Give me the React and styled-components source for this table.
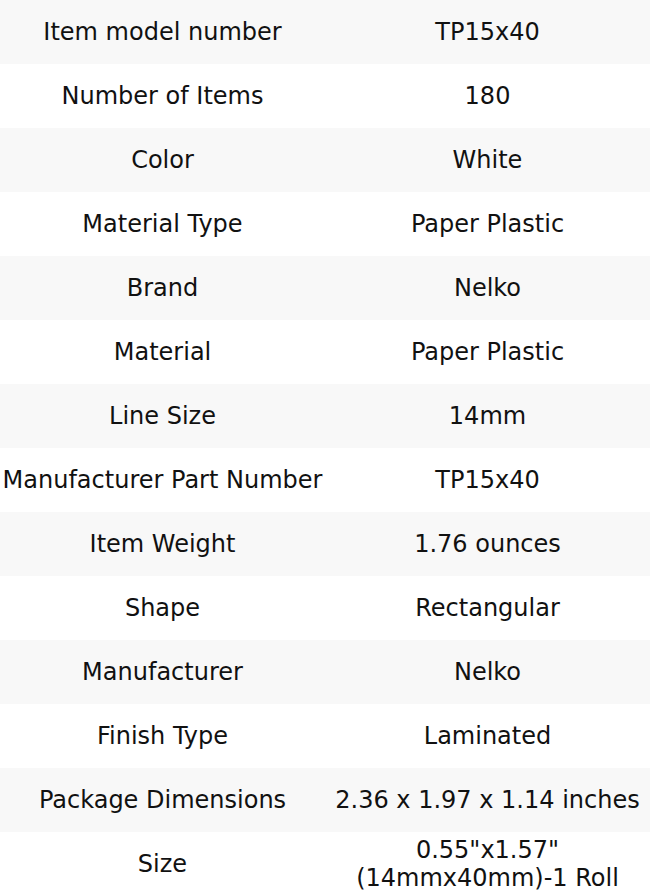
import React from 'react'
import styled, { createGlobalStyle } from 'styled-components'

const GlobalStyle = createGlobalStyle`
    body {
        margin: 0;
        background: #fff;
        font-family: 'DejaVu Sans', 'Liberation Sans', sans-serif;
    }
`;

const Table = styled.table`
    width: 650px;
    border-collapse: collapse;
    table-layout: fixed;
`;

const Row = styled.tr`
    background-color: ${(props => props.shaded ? "#f8f8f8" : "#fff")};
`;

const Cell = styled.td`
    width: 50%;
    height: 64px;
    padding: 0;
    text-align: center;
    vertical-align: middle;
    font-size: 24px;
    line-height: 28px;
    color: #111;
`;

const specs = [
    ["Item model number", "TP15x40"],
    ["Number of Items", "180"],
    ["Color", "White"],
    ["Material Type", "Paper Plastic"],
    ["Brand", "Nelko"],
    ["Material", "Paper Plastic"],
    ["Line Size", "14mm"],
    ["Manufacturer Part Number", "TP15x40"],
    ["Item Weight", "1.76 ounces"],
    ["Shape", "Rectangular"],
    ["Manufacturer", "Nelko"],
    ["Finish Type", "Laminated"],
    ["Package Dimensions", "2.36 x 1.97 x 1.14 inches"],
    ["Size", "0.55\"x1.57\" (14mmx40mm)-1 Roll"],
];

const App = () => {
    return (
        <>
            <GlobalStyle />
            <Table>
                <tbody>
                    {specs.map(([label, value], idx) => (
                        <Row key={idx} shaded={idx % 2 === 0}>
                            <Cell>{label}</Cell>
                            <Cell>{value}</Cell>
                        </Row>
                    ))}
                </tbody>
            </Table>
        </>
    )
}

export default App
